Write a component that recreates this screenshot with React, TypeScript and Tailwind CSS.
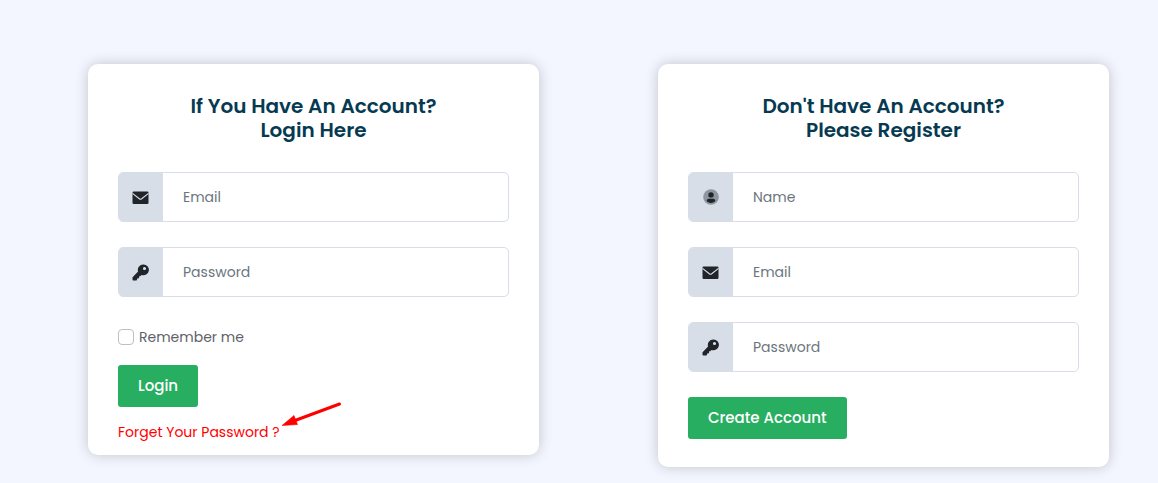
import type { ReactNode } from "react";

function EnvelopeIcon() {
  return (
    <svg viewBox="0 0 17 17" className="size-[17px]" aria-hidden="true">
      <rect x="0.5" y="2.5" width="16" height="12.5" rx="1.2" fill="#212529" />
      <path
        d="M0.5 4.4 7.3 9.8a2 2 0 0 0 2.4 0L16.5 4.4"
        fill="none"
        stroke="#d8dee8"
        strokeWidth="1.1"
      />
    </svg>
  );
}

function KeyIcon() {
  return (
    <svg viewBox="0 0 17 17" className="size-[17px]" aria-hidden="true">
      <path
        fillRule="evenodd"
        fill="#212529"
        d="M11.2 0.5a5.4 5.4 0 0 0-5.1 7.1L0.8 12.9a1 1 0 0 0-.3.7v2.1c0 .5.3.8.8.8h2.9c.5 0 .8-.3.8-.8v-1.3h1.3c.5 0 .8-.3.8-.8v-1.4h1.1l1.3-1.3a5.4 5.4 0 1 0 1.7-10.4ZM12.5 2.9a1.6 1.6 0 1 1 0 3.2 1.6 1.6 0 0 1 0-3.2Z"
      />
    </svg>
  );
}

function UserBadgeIcon() {
  return (
    <svg viewBox="0 0 16 16" className="size-4" aria-hidden="true">
      <circle cx="8" cy="8" r="7.8" fill="#90969f" />
      <circle cx="8" cy="5.9" r="2.7" fill="#212529" />
      <path
        d="M3.6 11.8C3.8 10.4 5 9.8 6.2 9.8h3.6c1.2 0 2.4.6 2.6 2-.9 1.3-2.5 2.1-4.4 2.1s-3.5-.8-4.4-2.1Z"
        fill="#212529"
      />
    </svg>
  );
}

type FieldProps = { id: string; label: string; type: string; icon: ReactNode };

function Field({ id, label, type, icon }: FieldProps) {
  return (
    <div className="flex h-[50px] overflow-hidden rounded-[5px] border border-[#d8dee8] bg-white">
      <label
        htmlFor={id}
        aria-label={label}
        className="flex w-11 shrink-0 items-center justify-center bg-[#d8dee8] pr-px"
      >
        {icon}
      </label>
      <input
        id={id}
        type={type}
        placeholder={label}
        className="min-w-0 flex-1 px-5 text-sm text-[#212529] outline-none placeholder:text-[#6c757d]"
      />
    </div>
  );
}

function Card({ title, children }: { title: ReactNode; children: ReactNode }) {
  return (
    <section className="rounded-[10px] bg-white px-[30px] pt-[30px] shadow-[0_0_14px_rgba(0,0,0,0.2)]">
      <h2 className="mb-[30px] text-center text-xl leading-6 font-semibold text-[#063a52]">
        {title}
      </h2>
      {children}
    </section>
  );
}

function SubmitButton({ children }: { children: ReactNode }) {
  return (
    <button
      type="submit"
      className="h-[42px] rounded-[3px] bg-[#28ae61] px-5 text-[15px] font-medium text-white"
    >
      {children}
    </button>
  );
}

export default function App() {
  return (
    <main className="min-h-screen bg-[#f3f6fe] pt-16 pr-[49px] pb-4 pl-[88px] font-['Poppins','Inter',sans-serif]">
      <div className="grid grid-cols-2 items-start gap-[119px]">
        <Card
          title={
            <>
              If You Have An Account?
              <br />
              Login Here
            </>
          }
        >
          <form className="pb-3" onSubmit={(e) => e.preventDefault()}>
            <div className="flex flex-col gap-[25px]">
              <Field id="login-email" label="Email" type="email" icon={<EnvelopeIcon />} />
              <Field id="login-password" label="Password" type="password" icon={<KeyIcon />} />
            </div>
            <div className="mt-7 flex h-6 items-center gap-[5px]">
              <input
                id="remember"
                type="checkbox"
                className="size-4 appearance-none rounded-[4px] border border-[#bfbfbf] bg-white checked:bg-[#28ae61]"
              />
              <label htmlFor="remember" className="text-sm text-[#5f6168]">
                Remember me
              </label>
            </div>
            <div className="mt-4 flex">
              <SubmitButton>Login</SubmitButton>
            </div>
            <div className="relative mt-[14px] flex">
              <a href="#forgot" className="text-sm leading-[22px] text-[#ff0000]">
                Forget Your Password ?
              </a>
              <svg
                viewBox="0 0 60 26"
                className="absolute -top-[19px] left-[164px] h-[26px] w-[60px]"
                aria-hidden="true"
              >
                <path d="M57.5 2 13 18.5" stroke="#ff0000" strokeWidth="3" strokeLinecap="round" />
                <path d="M0 23.5 12 13.5 13.5 17.5 15.5 22.5Z" fill="#ff0000" stroke="#ff0000" strokeWidth="0.6" />
              </svg>
            </div>
          </form>
        </Card>
        <Card
          title={
            <>
              Don't Have An Account?
              <br />
              Please Register
            </>
          }
        >
          <form className="pb-7" onSubmit={(e) => e.preventDefault()}>
            <div className="flex flex-col gap-[25px]">
              <Field id="register-name" label="Name" type="text" icon={<UserBadgeIcon />} />
              <Field id="register-email" label="Email" type="email" icon={<EnvelopeIcon />} />
              <Field id="register-password" label="Password" type="password" icon={<KeyIcon />} />
            </div>
            <div className="mt-[25px] flex">
              <SubmitButton>Create Account</SubmitButton>
            </div>
          </form>
        </Card>
      </div>
    </main>
  );
}
